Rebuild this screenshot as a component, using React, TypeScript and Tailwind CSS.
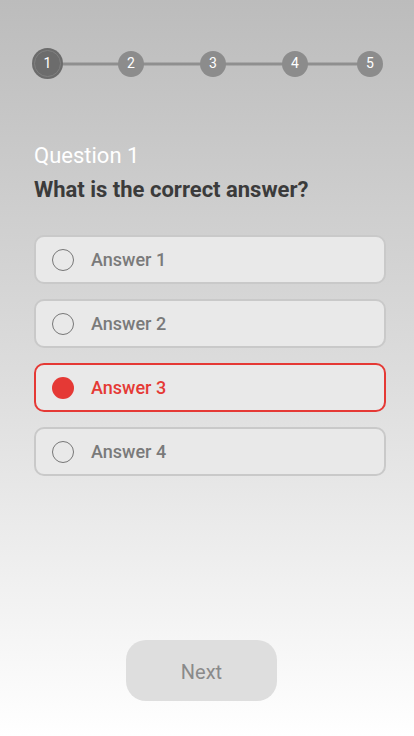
import { useState } from 'react';

const answers = ['Answer 1', 'Answer 2', 'Answer 3', 'Answer 4'];

export default function App() {
  const [selected, setSelected] = useState(2);

  const dot = 'relative w-[26px] h-[26px] rounded-full bg-[#8c8c8c] flex items-center justify-center text-white text-[14px]';

  return (
    <div
      className="w-[414px] h-[736px] flex flex-col bg-gradient-to-b from-[#bcbcbc] via-[#dcdcdc] to-white overflow-hidden"
      style={{ fontFamily: 'Roboto, "Noto Sans", sans-serif' }}
    >
      {/* Stepper */}
      <div className="relative mt-[48px] ml-[32px] w-[351px] flex items-center">
        <div className="absolute left-[16px] right-[12px] top-1/2 -translate-y-1/2 h-[3px] bg-[#8f8f8f]" />
        <div className="relative w-[31px] h-[31px] rounded-full bg-[#6c6c6c] flex items-center justify-center">
          <div className="absolute inset-[2px] rounded-full border border-[#808080]" />
          <span className="relative text-white text-[14px]">1</span>
        </div>
        <div className={`${dot} ml-[55px]`}>2</div>
        <div className={`${dot} ml-[56px]`}>3</div>
        <div className={`${dot} ml-[56px]`}>4</div>
        <div className={`${dot} ml-[49px]`}>5</div>
      </div>

      {/* Question */}
      <div className="mt-[64px] px-[34px]">
        <div className="text-white text-[22px] font-normal leading-[26px]">Question 1</div>
        <div className="mt-[8px] text-[#3b3b3b] text-[22px] font-bold leading-[26px]">
          What is the correct answer?
        </div>
      </div>

      {/* Answers */}
      <div className="mt-[32px] px-[34px] flex flex-col gap-[15px]">
        {answers.map((a, i) => {
          const active = i === selected;
          return (
            <button
              key={a}
              onClick={() => setSelected(i)}
              className={`h-[49px] w-[352px] rounded-[10px] border-2 bg-[#e9e9e9] flex items-center px-[16px] text-left ${
                active ? 'border-[#e53935]' : 'border-[#c9c9c9]'
              }`}
            >
              {active ? (
                <span className="w-[22px] h-[22px] rounded-full bg-[#e53935]" />
              ) : (
                <span className="w-[22px] h-[22px] rounded-full border border-[#777]" />
              )}
              <span
                className={`ml-[17px] text-[18px] font-medium ${
                  active ? 'text-[#e53935]' : 'text-[#7a7a7a]'
                }`}
              >
                {a}
              </span>
            </button>
          );
        })}
      </div>

      {/* Next */}
      <div className="mt-auto mb-[35px] pl-[126px]">
        <button className="w-[151px] h-[61px] rounded-[20px] bg-[#dedede] text-[#8a8a8a] text-[20px] pt-[3px]">
          Next
        </button>
      </div>
    </div>
  );
}
